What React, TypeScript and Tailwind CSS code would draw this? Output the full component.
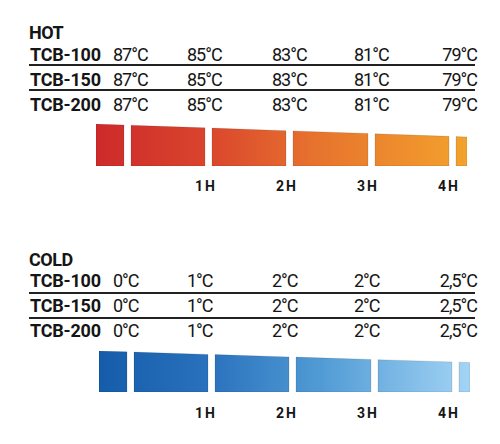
const BARS: [number, number][] = [
  [0, 28],
  [35, 109],
  [116, 190],
  [197, 272],
  [279, 353],
  [360, 371],
];

type Section = {
  id: string;
  title: string;
  rows: string[][];
  stops: string[];
  height: number;
  drop: number;
  barOffset: string;
  rowClass: string;
  titleGap: string;
  barGap: string;
  labelGap: string;
};

const sections: Section[] = [
  {
    id: 'hot',
    title: 'HOT',
    rows: [
      ['TCB-100', '87°C', '85°C', '83°C', '81°C', '79°C'],
      ['TCB-150', '87°C', '85°C', '83°C', '81°C', '79°C'],
      ['TCB-200', '87°C', '85°C', '83°C', '81°C', '79°C'],
    ],
    stops: ['#cd2a2b', '#da452d', '#e7742e', '#f3a22d'],
    height: 42,
    drop: 13,
    barOffset: 'ml-[67px]',
    rowClass: 'pt-[5px]',
    titleGap: '-mt-[1px]',
    barGap: 'mt-[10px]',
    labelGap: 'mt-[13px]',
  },
  {
    id: 'cold',
    title: 'COLD',
    rows: [
      ['TCB-100', '0°C', '1°C', '2°C', '2°C', '2,5°C'],
      ['TCB-150', '0°C', '1°C', '2°C', '2°C', '2,5°C'],
      ['TCB-200', '0°C', '1°C', '2°C', '2°C', '2,5°C'],
    ],
    stops: ['#155caa', '#2a72bd', '#519bd5', '#a3d4f5'],
    height: 41,
    drop: 11.5,
    barOffset: 'ml-[70px]',
    rowClass: 'pt-[3px] pb-[2px]',
    titleGap: 'mt-0',
    barGap: 'mt-[9px]',
    labelGap: 'mt-[14px]',
  },
];

function BarChart({ s }: { s: Section }) {
  const top = (x: number) => (s.drop * x) / 371;
  return (
    <svg width="371" height={s.height} viewBox={`0 0 371 ${s.height}`} className={`block ${s.barOffset} ${s.barGap}`}>
      <defs>
        <linearGradient id={`g-${s.id}`} gradientUnits="userSpaceOnUse" x1="0" y1="0" x2="371" y2="0">
          <stop offset="0" stopColor={s.stops[0]} />
          <stop offset="0.3" stopColor={s.stops[1]} />
          <stop offset="0.6" stopColor={s.stops[2]} />
          <stop offset="1" stopColor={s.stops[3]} />
        </linearGradient>
      </defs>
      {BARS.map(([a, b]) => (
        <polygon
          key={a}
          points={`${a},${top(a)} ${b},${top(b)} ${b},${s.height} ${a},${s.height}`}
          fill={`url(#g-${s.id})`}
          stroke="rgba(0,0,0,0.14)"
          strokeWidth="0.8"
        />
      ))}
    </svg>
  );
}

function TableSection({ s, first }: { s: Section; first: boolean }) {
  return (
    <section className={first ? '' : 'mt-[58px]'}>
      <h2 className="text-[18px] leading-[18px] font-bold tracking-[-0.5px]">{s.title}</h2>

      <div className={`w-[446px] ${s.titleGap}`}>
        {s.rows.map((row, i) => (
          <div
            key={row[0]}
            className={`grid grid-cols-[84px_74px_85px_82px_60px_1fr] text-[18px] leading-[18px] ${s.rowClass} ${
              i < s.rows.length - 1 ? 'border-b-2 border-[#222]' : ''
            }`}
          >
            <span className="pl-px font-bold tracking-[-0.2px]">{row[0]}</span>
            {row.slice(1, 5).map((v, j) => (
              <span key={j} className="tracking-[-1px]">
                {v}
              </span>
            ))}
            <span className="col-start-6 text-right tracking-[-1px] -mr-[2px]">{row[5]}</span>
          </div>
        ))}
      </div>

      <BarChart s={s} />

      {/* hour marks */}
      <div className={`ml-[67px] flex text-[14px] leading-[14px] font-bold tracking-[2px] ${s.labelGap}`}>
        <span className="w-[121px] text-right">1H</span>
        <span className="w-[81px] text-right">2H</span>
        <span className="w-[81px] text-right">3H</span>
        <span className="w-[81px] text-right">4H</span>
      </div>
    </section>
  );
}

export default function App() {
  return (
    <div className="w-[500px] h-[444px] bg-white text-[#151515] font-['Roboto',sans-serif] pt-[24px] pl-[29px] overflow-hidden">
      {sections.map((s, i) => (
        <TableSection key={s.id} s={s} first={i === 0} />
      ))}
    </div>
  );
}
